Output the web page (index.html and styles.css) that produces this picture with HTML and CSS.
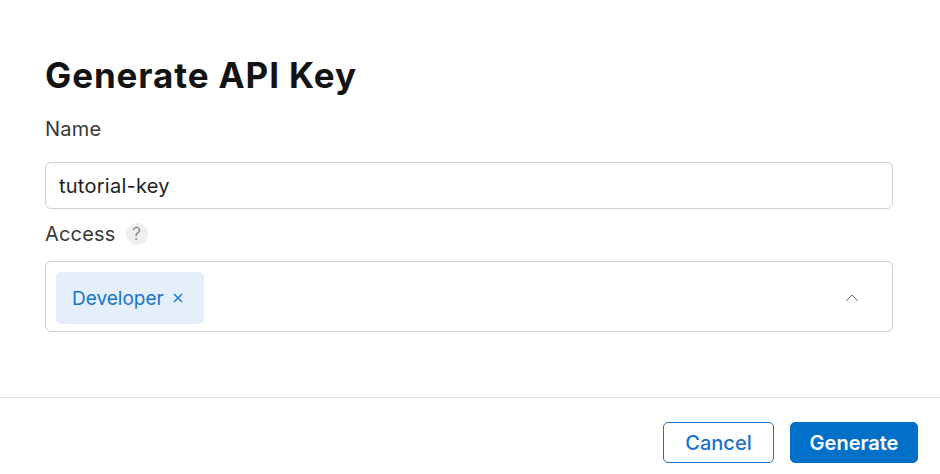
FILE: index.html
```html
<!DOCTYPE html>
<html lang="en">
<head>
<meta charset="utf-8">
<title>Generate API Key</title>
<link rel="stylesheet" href="styles.css">
</head>
<body>
<div class="dialog">
  <div class="content">
    <h1 class="title">Generate API Key</h1>
    <div class="field">
      <div class="label-row"><span class="label">Name</span></div>
      <div class="input">tutorial-key</div>
    </div>
    <div class="field field-access">
      <div class="label-row"><span class="label">Access</span><span class="help">?</span></div>
      <div class="select">
        <span class="chip">Developer
          <svg class="chip-x" width="10" height="10" viewBox="0 0 10 10"><path d="M1 1 L9 9 M9 1 L1 9" stroke="#1a73c9" stroke-width="1.4" fill="none"/></svg>
        </span>
        <svg class="chevron" width="14" height="8" viewBox="0 0 14 8"><path d="M1 7.2 L7 1 L13 7.2" stroke="#6b6b6b" stroke-width="1" fill="none"/></svg>
      </div>
    </div>
  </div>
  <div class="footer">
    <button class="btn btn-secondary">Cancel</button>
    <button class="btn btn-primary">Generate</button>
  </div>
</div>
</body>
</html>
```

FILE: styles.css
```css
* { box-sizing: border-box; }
html, body {
  margin: 0;
  padding: 0;
  background: #ffffff;
  font-family: "Inter", "Noto Sans", sans-serif;
  color: #333333;
}
.dialog {
  width: 940px;
  height: 474px;
  display: flex;
  flex-direction: column;
}
.content {
  padding: 54px 47px 0 45px;
  height: 397px;
}
.title {
  margin: 0;
  font-size: 35px;
  line-height: 42px;
  font-weight: 700;
  color: #131313;
  letter-spacing: 0.9px;
}
.field {
  margin-top: 21px;
}
.field-access {
  margin-top: 13px;
}
.label-row {
  display: flex;
  align-items: center;
  height: 24px;
}
.label {
  font-size: 20px;
  line-height: 24px;
  color: #383838;
  letter-spacing: 0.2px;
}
.help {
  margin-left: 10px;
  width: 22px;
  height: 22px;
  border-radius: 50%;
  background: #efefef;
  color: #707070;
  font-size: 17px;
  font-weight: 300;
  display: flex;
  align-items: center;
  justify-content: center;
}
.input {
  margin-top: 21px;
  height: 47px;
  border: 1px solid #d0d0d0;
  border-radius: 6px;
  padding: 0 13px;
  display: flex;
  align-items: center;
  font-size: 20px;
  letter-spacing: 0.25px;
  color: #1e1e1e;
}
.field-access .select {
  margin-top: 15px;
}
.select {
  height: 71px;
  border: 1px solid #d0d0d0;
  border-radius: 6px;
  padding: 10px 33px 0 10px;
  display: flex;
  align-items: flex-start;
}
.chip {
  height: 52px;
  background: #e4effb;
  border-radius: 5px;
  padding: 0 21px 0 16px;
  display: flex;
  align-items: center;
  font-size: 19px;
  color: #1a73c9;
}
.chip-x {
  margin-left: 9px;
}
.chevron {
  margin-left: auto;
  margin-top: 22px;
}
.footer {
  border-top: 1px solid #dcdcdc;
  padding: 24px 22px 0 0;
  display: flex;
  justify-content: flex-end;
  gap: 16px;
}
.btn {
  height: 41px;
  border-radius: 5px;
  font-family: "Inter", "Noto Sans", sans-serif;
  font-size: 20px;
  padding: 0;
  display: flex;
  align-items: center;
  justify-content: center;
}
.btn-secondary {
  width: 111px;
  background: #ffffff;
  border: 1px solid #1a73c9;
  color: #1a73c9;
  font-weight: 500;
}
.btn-primary {
  width: 128px;
  background: #0070c9;
  border: 1px solid #0070c9;
  color: #ffffff;
  font-weight: 600;
}
```
